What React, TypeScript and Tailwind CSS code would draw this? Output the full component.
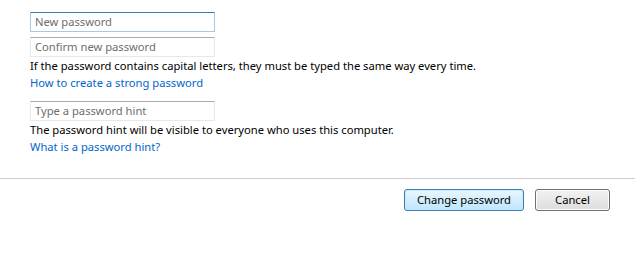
export default function App() {
  return (
    <div className="h-[265px] w-[635px] bg-white font-['Noto_Sans',sans-serif] text-[11.2px] text-black">
      <div className="flex flex-col pl-[30px] pt-[12px]">
        <div className="flex h-[20px] w-[185px] items-center border border-[#a4c9e3] border-t-[#3d7bad] px-[4px] text-[#6d6d6d]">
          New password
        </div>
        <div className="mt-[5px] flex h-[20px] w-[185px] items-center border border-[#e3e9ef] border-t-[#abadb3] px-[4px] text-[#6d6d6d]">
          Confirm new password
        </div>
        <p className="leading-[17px]">
          If the password contains capital letters, they must be typed the same way every time.
        </p>
        <a className="w-fit leading-[17px] text-[#0066cc]" href="#">
          How to create a strong password
        </a>
        <div className="mt-[10px] flex h-[20px] w-[185px] items-center border border-[#e3e9ef] border-t-[#abadb3] px-[4px] text-[#6d6d6d]">
          Type a password hint
        </div>
        <p className="leading-[17px]">
          The password hint will be visible to everyone who uses this computer.
        </p>
        <a className="w-fit leading-[17px] text-[#0066cc]" href="#">
          What is a password hint?
        </a>
      </div>
      <div className="mt-[23px] h-px w-full bg-[#cccccc]" />
      <div className="mt-[10px] flex justify-end gap-[11px] pr-[25px]">
        <button className="h-[22px] w-[120px] rounded-[3px] border border-[#3c7fb1] bg-gradient-to-b from-[#eaf6fd] to-[#bee6fd] shadow-[inset_0_0_0_1px_#c6eaff]">
          Change password
        </button>
        <button className="h-[22px] w-[75px] rounded-[3px] border border-[#707070] bg-gradient-to-b from-[#f2f2f2] to-[#dddddd] shadow-[inset_0_0_0_1px_#fcfcfc]">
          Cancel
        </button>
      </div>
    </div>
  )
}
